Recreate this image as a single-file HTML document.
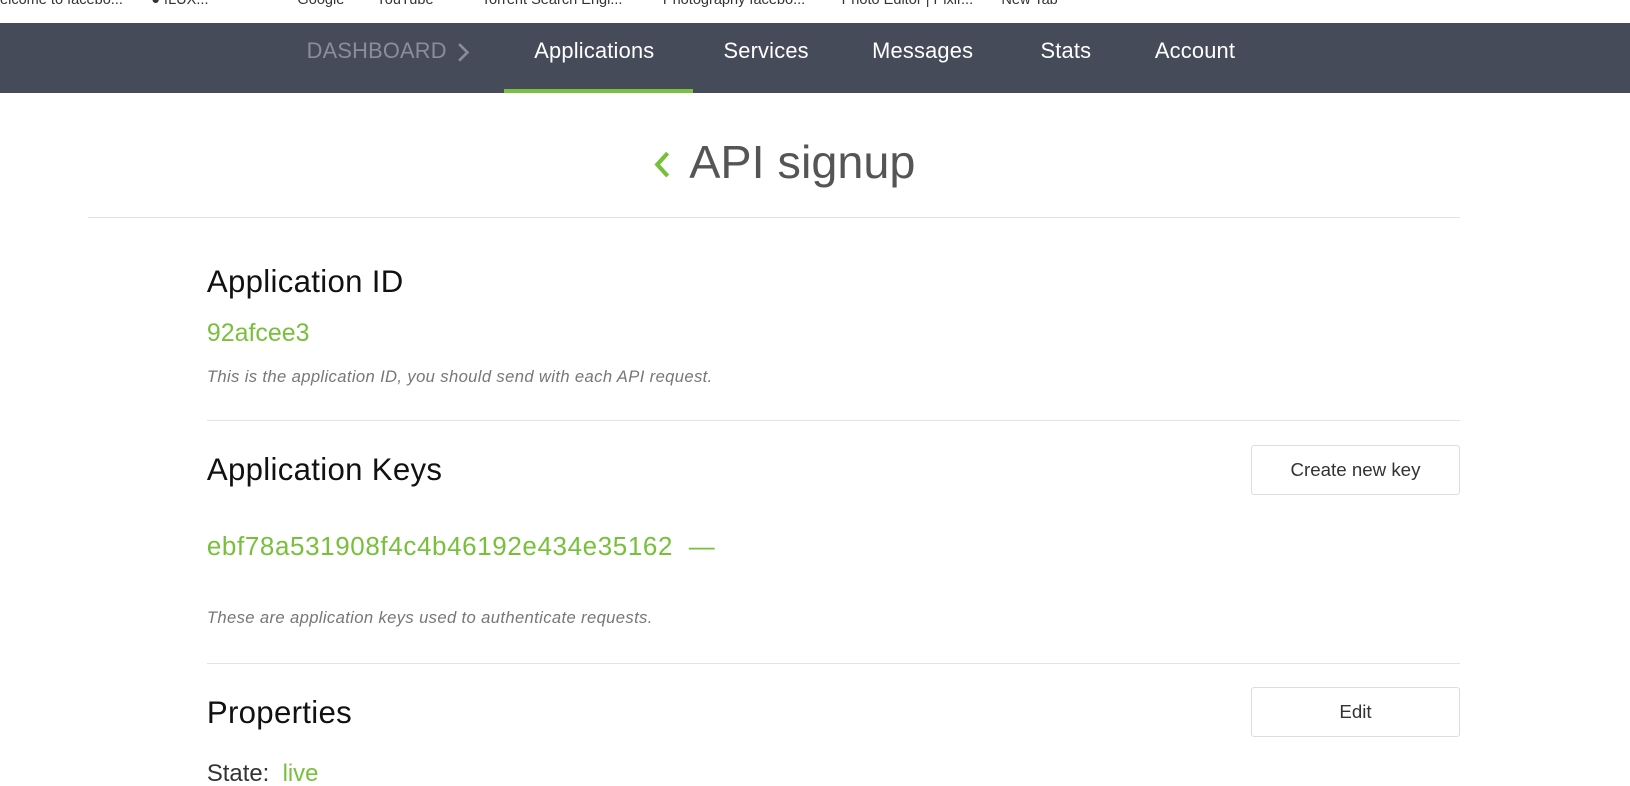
<!DOCTYPE html>
<html><head><meta charset="utf-8"><style>
html,body{margin:0;padding:0;background:#fff;overflow:hidden}
body{width:1630px;height:786px}
#w{position:relative;width:1568px;height:756px;zoom:1.0395;font-family:"Liberation Sans",sans-serif}
.a{position:absolute;white-space:nowrap}
.nav{position:absolute;left:0;top:22px;width:1568px;height:67px;background:#464b5a}
.ni{position:absolute;top:37px;font-size:21px;color:#fff;letter-spacing:0.2px}
.hr{position:absolute;height:1px;background:#e3e3e3}
.h{font-size:30px;color:#111;letter-spacing:0.3px}
.g{color:#78c03c}
.it{font-style:italic;color:#777;font-size:16px;letter-spacing:0.35px}
.btn{position:absolute;left:1203px;width:200px;height:46px;border:1px solid #ddd;border-radius:3px;font-size:18px;color:#333;text-align:center;line-height:46px}
</style></head><body><div id="w">
<div class="a" style="left:0;top:-8px;font-size:14px;color:#333">elcome to facebo... &nbsp;&nbsp;&nbsp;&nbsp;&nbsp; ● fLUX... &nbsp;&nbsp;&nbsp;&nbsp;&nbsp;&nbsp;&nbsp;&nbsp;&nbsp;&nbsp;&nbsp;&nbsp;&nbsp;&nbsp;&nbsp;&nbsp;&nbsp;&nbsp;&nbsp;&nbsp; Google &nbsp;&nbsp;&nbsp;&nbsp;&nbsp;&nbsp; YouTube &nbsp;&nbsp;&nbsp;&nbsp;&nbsp;&nbsp;&nbsp;&nbsp;&nbsp;&nbsp; Torrent Search Engi... &nbsp;&nbsp;&nbsp;&nbsp;&nbsp;&nbsp;&nbsp;&nbsp; Photography facebo... &nbsp;&nbsp;&nbsp;&nbsp;&nbsp;&nbsp;&nbsp; Photo Editor | Pixlr... &nbsp;&nbsp;&nbsp;&nbsp;&nbsp; New Tab</div>
<div class="nav"></div>
<div class="ni" style="left:295px;color:#8a8e99">DASHBOARD</div>
<svg class="a" style="left:439px;top:40px" width="14" height="20" viewBox="0 0 14 20"><path d="M3 2 L11 10 L3 18" fill="none" stroke="#8a8e99" stroke-width="2.5"/></svg>
<div class="ni" style="left:514px">Applications</div>
<div class="ni" style="left:696px">Services</div>
<div class="ni" style="left:839px">Messages</div>
<div class="ni" style="left:1001px">Stats</div>
<div class="ni" style="left:1111px">Account</div>
<div class="a" style="left:485px;top:86px;width:182px;height:3px;background:#7ac143"></div>
<svg class="a" style="left:626px;top:144px" width="22" height="28" viewBox="0 0 22 28"><path d="M16 3 L6 14 L16 25" fill="none" stroke="#78c03c" stroke-width="4"/></svg>
<div class="a" style="left:663px;top:130px;font-size:45px;color:#555">API signup</div>
<div class="hr" style="left:85px;top:209px;width:1320px"></div>
<div class="a h" style="left:199px;top:254px">Application ID</div>
<div class="a g" style="left:199px;top:307px;font-size:24px">92afcee3</div>
<div class="a it" style="left:199px;top:353px">This is the application ID, you should send with each API request.</div>
<div class="hr" style="left:199px;top:404px;width:1206px"></div>
<div class="a h" style="left:199px;top:435px">Application Keys</div>
<div class="btn" style="top:428px">Create new key</div>
<div class="a g" style="left:199px;top:511px;font-size:25px;letter-spacing:0.6px">ebf78a531908f4c4b46192e434e35162 &nbsp;—</div>
<div class="a it" style="left:199px;top:585px">These are application keys used to authenticate requests.</div>
<div class="hr" style="left:199px;top:638px;width:1206px"></div>
<div class="a h" style="left:199px;top:669px">Properties</div>
<div class="btn" style="top:661px">Edit</div>
<div class="a" style="left:199px;top:731px;font-size:23px;color:#333">State: &nbsp;<span class="g">live</span></div>
</div></body></html>
